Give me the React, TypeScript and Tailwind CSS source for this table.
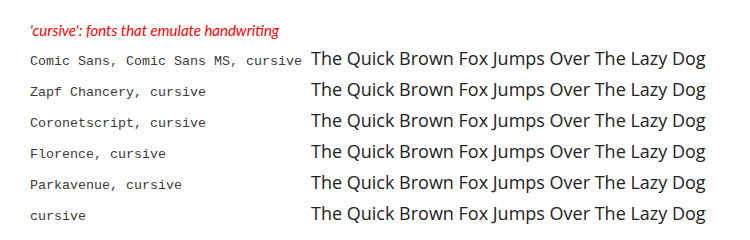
import React from 'react';

const rows = [
  'Comic Sans, Comic Sans MS, cursive',
  'Zapf Chancery, cursive',
  'Coronetscript, cursive',
  'Florence, cursive',
  'Parkavenue, cursive',
  'cursive',
];

const App: React.FC = () => {
  return (
    <div className="w-[750px] h-[240px] bg-white pl-[30px] pt-[20px]">
      <p className="text-[15px] leading-[20px] italic text-[#ff0000] font-['Lato',sans-serif]">
        'cursive': fonts that emulate handwriting
      </p>
      <div className="-mt-[1px] flex flex-col">
        {rows.map((label) => (
          <div key={label} className="flex items-baseline h-[31px] pt-[6px]">
            <span className="w-[281px] shrink-0 text-[13.33px] text-[#3a3a3a] font-['Liberation_Mono',monospace]">
              {label}
            </span>
            <span className="text-[18px] text-[#222222] font-['Open_Sans',sans-serif] whitespace-nowrap">
              The Quick Brown Fox Jumps Over The Lazy Dog
            </span>
          </div>
        ))}
      </div>
    </div>
  );
};

export default App;
